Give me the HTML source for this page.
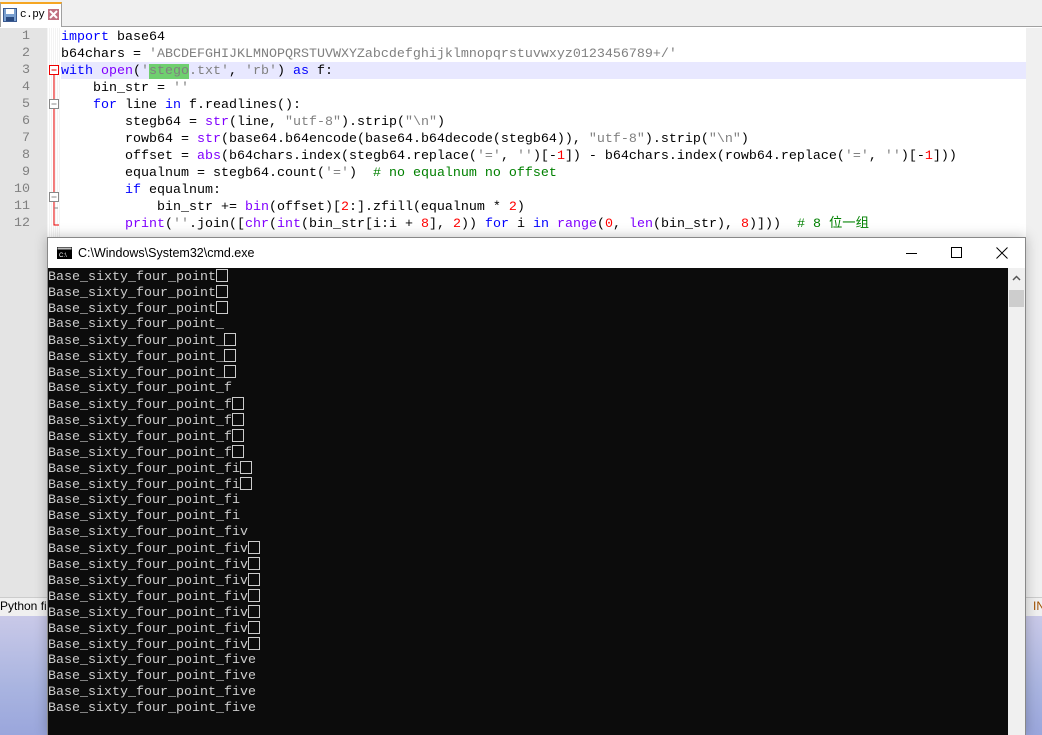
<!DOCTYPE html>
<html><head><meta charset="utf-8"><style>
*{margin:0;padding:0;box-sizing:border-box}
body{width:1042px;height:735px;overflow:hidden;background:#fff;position:relative;font-family:"Liberation Sans",sans-serif}
.tabbar{position:absolute;left:0;top:0;width:1042px;height:27px;background:#f0f0f0;border-bottom:1px solid #a0a0a0}
.tab{position:absolute;left:0;top:2px;width:62px;height:25px;background:#fff;border:1px solid #a0a0a0;border-bottom:none;border-top:2px solid #f5a623}
.tab .t{position:absolute;left:19px;top:5px;font:11px "Liberation Mono",monospace;letter-spacing:-0.5px}
.gut{position:absolute;left:0;top:28px;width:47px;height:570px;background:#e4e4e4}
.fold{position:absolute;left:47px;top:28px;width:14px;height:570px;background:repeating-linear-gradient(90deg,#f3f3f3 0 1px,#fff 1px 2px)}
.ln{position:absolute;left:0;width:30px;text-align:right;font:13.33px "Liberation Mono",monospace;color:#808080}
.code{position:absolute;left:61px;font:13.33px "Liberation Mono",monospace;white-space:pre;color:#000;height:17px;line-height:17px;overflow:visible}
.cjk{font-family:"Noto Sans CJK SC",sans-serif;line-height:0}
.k{color:#0000ff}.b{color:#8000ff}.s{color:#808080}.n{color:#ff0000}.c{color:#008000}
.hl{position:absolute;left:61px;top:62px;width:965px;height:17px;background:#e8e8ff}
.status{position:absolute;left:0;top:597px;width:1042px;height:19px;background:#f0f0f0;border-top:1px solid #ccc;font-size:12px}
.desk{position:absolute;left:0;top:616px;width:1042px;height:119px;background:linear-gradient(180deg,#c9c9e8,#a9b4e0 60%,#9aa6dc)}
.rside{position:absolute;left:1026px;top:28px;width:16px;height:570px;background:#f0f0f0}
.cmd{position:absolute;left:47px;top:237px;width:979px;height:498px;border:1px solid #888;border-bottom:none;background:#fff;box-shadow:0 0 12px rgba(0,0,0,.25);overflow:hidden}
.title{position:absolute;left:0;top:0;width:100%;height:30px;background:#fff;font-size:12.5px}
.con{position:absolute;left:0;top:30px;width:960px;height:468px;background:#0c0c0c;color:#ccc;font:13.33px "Liberation Mono",monospace;overflow:hidden;padding-top:1px}
.con div{height:16px;line-height:16px;white-space:pre;overflow:hidden}
.sb{position:absolute;left:960px;top:30px;width:17px;height:468px;background:#f0f0f0}
.bx{display:inline-block;width:12px;height:13px;border:1px solid #ccc;vertical-align:-2px}
</style></head><body>
<div class="tabbar"><div class="tab">
<svg style="position:absolute;left:2px;top:4px" width="14" height="14"><rect x="0.5" y="0.5" width="13" height="13" fill="#7aa0d0" stroke="#3a5a90"/><rect x="3" y="1" width="8" height="5" fill="#fff"/><rect x="3" y="9" width="8" height="4" fill="#2a4a80"/></svg>
<span class="t">c.py</span>
<svg style="position:absolute;left:47px;top:5px" width="11" height="11"><rect width="11" height="11" fill="#c07080"/><path d="M2 2L9 9M9 2L2 9" stroke="#fff" stroke-width="2"/></svg>
</div></div>
<div class="gut"></div><div class="fold"></div><div class="hl"></div><div class="rside"></div>
<div class="ln" style="top:29px">1</div><div class="ln" style="top:46px">2</div><div class="ln" style="top:63px">3</div><div class="ln" style="top:80px">4</div><div class="ln" style="top:97px">5</div><div class="ln" style="top:114px">6</div><div class="ln" style="top:131px">7</div><div class="ln" style="top:148px">8</div><div class="ln" style="top:165px">9</div><div class="ln" style="top:182px">10</div><div class="ln" style="top:199px">11</div><div class="ln" style="top:216px">12</div>
<svg style="position:absolute;left:47px;top:28px" width="14" height="210">
<rect x="2.5" y="37.5" width="9" height="9" fill="#fff" stroke="#e00"/><path d="M4.5 42h5" stroke="#e00"/>
<path d="M7 47V197h5" stroke="#e00" fill="none"/>
<rect x="2.5" y="71.5" width="9" height="9" fill="#fff" stroke="#888"/><path d="M4.5 76h5" stroke="#888"/>
<rect x="2.5" y="164.5" width="9" height="9" fill="#fff" stroke="#888"/><path d="M4.5 169h5" stroke="#888"/>
<path d="M7 180h4" stroke="#888"/>
</svg>
<div class="code" style="top:29px"><span class="k">import</span> base64</div>
<div class="code" style="top:46px">b64chars = <span class="s">'ABCDEFGHIJKLMNOPQRSTUVWXYZabcdefghijklmnopqrstuvwxyz0123456789+/'</span></div>
<div class="code" style="top:63px"><span class="k">with</span> <span class="b">open</span>(<span class="s">'<span style="background:#6fcf6f">stego</span>.txt'</span>, <span class="s">'rb'</span>) <span class="k">as</span> f:</div>
<div class="code" style="top:80px">    bin_str = <span class="s">''</span></div>
<div class="code" style="top:97px">    <span class="k">for</span> line <span class="k">in</span> f.readlines():</div>
<div class="code" style="top:114px">        stegb64 = <span class="b">str</span>(line, <span class="s">"utf-8"</span>).strip(<span class="s">"\n"</span>)</div>
<div class="code" style="top:131px">        rowb64 = <span class="b">str</span>(base64.b64encode(base64.b64decode(stegb64)), <span class="s">"utf-8"</span>).strip(<span class="s">"\n"</span>)</div>
<div class="code" style="top:148px">        offset = <span class="b">abs</span>(b64chars.index(stegb64.replace(<span class="s">'='</span>, <span class="s">''</span>)[-<span class="n">1</span>]) - b64chars.index(rowb64.replace(<span class="s">'='</span>, <span class="s">''</span>)[-<span class="n">1</span>]))</div>
<div class="code" style="top:165px">        equalnum = stegb64.count(<span class="s">'='</span>)  <span class="c"># no equalnum no offset</span></div>
<div class="code" style="top:182px">        <span class="k">if</span> equalnum:</div>
<div class="code" style="top:199px">            bin_str += <span class="b">bin</span>(offset)[<span class="n">2</span>:].zfill(equalnum * <span class="n">2</span>)</div>
<div class="code" style="top:216px">        <span class="b">print</span>(<span class="s">''</span>.join([<span class="b">chr</span>(<span class="b">int</span>(bin_str[i:i + <span class="n">8</span>], <span class="n">2</span>)) <span class="k">for</span> i <span class="k">in</span> <span class="b">range</span>(<span class="n">0</span>, <span class="b">len</span>(bin_str), <span class="n">8</span>)]))  <span class="c"># 8 <span class="cjk">位一组</span></span></div>
<div class="status"><span style="position:absolute;left:0;top:1px;color:#000">Python fi</span><span style="position:absolute;left:1033px;top:1px;color:#a05000">IN</span></div>
<div class="desk"></div>
<div class="cmd">
<div class="title">
<svg style="position:absolute;left:9px;top:9px" width="15" height="12"><rect width="15" height="12" fill="#000"/><rect x="0.5" y="0.5" width="14" height="2" fill="#bbb"/><text x="2" y="10" font-size="6" fill="#fff" font-family="Liberation Sans">C:\</text></svg>
<span style="position:absolute;left:30px;top:8px;color:#000">C:\Windows\System32\cmd.exe</span>
<div style="position:absolute;left:858px;top:15px;width:11px;height:1px;background:#000"></div>
<div style="position:absolute;left:903px;top:9px;width:11px;height:11px;border:1px solid #000"></div>
<svg style="position:absolute;left:948px;top:9px" width="12" height="12"><path d="M0.5 0.5L11.5 11.5M11.5 0.5L0.5 11.5" stroke="#000"/></svg>
</div>
<div class="con">
<div>Base_sixty_four_point<span class="bx"></span></div>
<div>Base_sixty_four_point<span class="bx"></span></div>
<div>Base_sixty_four_point<span class="bx"></span></div>
<div>Base_sixty_four_point_</div>
<div>Base_sixty_four_point_<span class="bx"></span></div>
<div>Base_sixty_four_point_<span class="bx"></span></div>
<div>Base_sixty_four_point_<span class="bx"></span></div>
<div>Base_sixty_four_point_f</div>
<div>Base_sixty_four_point_f<span class="bx"></span></div>
<div>Base_sixty_four_point_f<span class="bx"></span></div>
<div>Base_sixty_four_point_f<span class="bx"></span></div>
<div>Base_sixty_four_point_f<span class="bx"></span></div>
<div>Base_sixty_four_point_fi<span class="bx"></span></div>
<div>Base_sixty_four_point_fi<span class="bx"></span></div>
<div>Base_sixty_four_point_fi</div>
<div>Base_sixty_four_point_fi</div>
<div>Base_sixty_four_point_fiv</div>
<div>Base_sixty_four_point_fiv<span class="bx"></span></div>
<div>Base_sixty_four_point_fiv<span class="bx"></span></div>
<div>Base_sixty_four_point_fiv<span class="bx"></span></div>
<div>Base_sixty_four_point_fiv<span class="bx"></span></div>
<div>Base_sixty_four_point_fiv<span class="bx"></span></div>
<div>Base_sixty_four_point_fiv<span class="bx"></span></div>
<div>Base_sixty_four_point_fiv<span class="bx"></span></div>
<div>Base_sixty_four_point_five</div>
<div>Base_sixty_four_point_five</div>
<div>Base_sixty_four_point_five</div>
<div>Base_sixty_four_point_five</div>
</div>
<div class="sb">
<svg style="position:absolute;left:4px;top:7px" width="9" height="6"><path d="M1 5L4.5 1.5L8 5" stroke="#555" stroke-width="1.5" fill="none"/></svg>
<div style="position:absolute;left:1px;top:22px;width:15px;height:17px;background:#cdcdcd"></div>
</div>
</div>
</body></html>
